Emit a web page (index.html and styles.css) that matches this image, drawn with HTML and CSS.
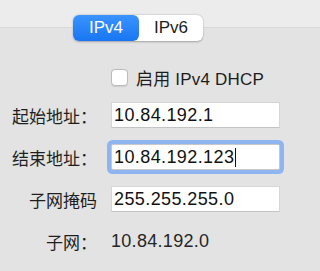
FILE: index.html
```html
<!DOCTYPE html>
<html lang="zh-CN">
<head>
    <meta charset="UTF-8">
    <meta name="viewport" content="width=device-width, initial-scale=1.0">
    <title>IPv4 设置</title>
    <link rel="stylesheet" href="styles.css">
</head>
<body>
    <div class="segmented">
        <div class="segment active">IPv4</div>
        <div class="segment">IPv6</div>
    </div>

    <div class="form">
        <label class="check-row">
            <span class="checkbox"></span>
            <span class="check-text">启用 IPv4 DHCP</span>
        </label>

        <div class="label">起始地址：</div>
        <div class="field">10.84.192.1</div>

        <div class="label">结束地址：</div>
        <div class="field focused">10.84.192.123<span class="caret"></span></div>

        <div class="label">子网掩码</div>
        <div class="field">255.255.255.0</div>

        <div class="label">子网：</div>
        <div class="value">10.84.192.0</div>
    </div>
</body>
</html>
```

FILE: styles.css
```css
body {
    margin: 0;
    height: 271px;
    font-family: 'Liberation Sans', 'Noto Sans CJK SC', sans-serif;
    color: #1d1d1d;
    background: linear-gradient(180deg, #ececec 0, #ececec 27px, #d9d9d9 27px, #d9d9d9 28px, #e3e3e3 28px);
    overflow: hidden;
}
.segmented {
    display: flex;
    width: 130px;
    height: 26px;
    margin: 15px 0 0 73px;
    border-radius: 6px;
    background: #fff;
    box-shadow: 0 0.5px 2px rgba(0, 0, 0, 0.3);
}
.segment {
    flex: 1;
    display: flex;
    align-items: center;
    justify-content: center;
    font-size: 17px;
    color: #1d1d1d;
    border-radius: 6px;
}
.segment.active {
    flex: 0 0 66px;
    color: #fff;
    background: linear-gradient(180deg, #3a93ff, #1876f2);
}
.form {
    display: grid;
    grid-template-columns: 97px 169px;
    grid-template-rows: 18px 26px 26px 26px 26px;
    column-gap: 14px;
    row-gap: 16px;
    margin-top: 27px;
}
.check-row {
    grid-column: 2;
    display: flex;
    align-items: center;
    gap: 8px;
}
.checkbox {
    width: 15px;
    height: 15px;
    border: 1px solid #bcbcbc;
    border-radius: 4px;
    background: #fff;
    box-shadow: 0 0.5px 1px rgba(0, 0, 0, 0.1);
}
.check-text {
    font-size: 17px;
    letter-spacing: 0.2px;
}
.label {
    display: flex;
    align-items: center;
    justify-content: flex-end;
    font-family: 'Noto Sans CJK JP', sans-serif;
    font-size: 17px;
    color: #1f1f1f;
}
.field {
    display: flex;
    align-items: center;
    padding-left: 2px;
    background: #fff;
    border: 1px solid #d6d6d6;
    border-bottom-color: #c4c4c4;
    box-sizing: border-box;
    font-size: 18px;
    letter-spacing: 0.4px;
    color: #111;
}
.field.focused {
    border-color: #c8c8c8;
    border-radius: 2px;
    box-shadow: 0 0 0 4px #8eb5ef;
}
.caret {
    width: 0;
    height: 19px;
    margin-left: 1px;
    border-left: 1.5px solid #111;
}
.value {
    display: flex;
    align-items: center;
    font-size: 18px;
    letter-spacing: 0.3px;
    color: #262626;
}
```
